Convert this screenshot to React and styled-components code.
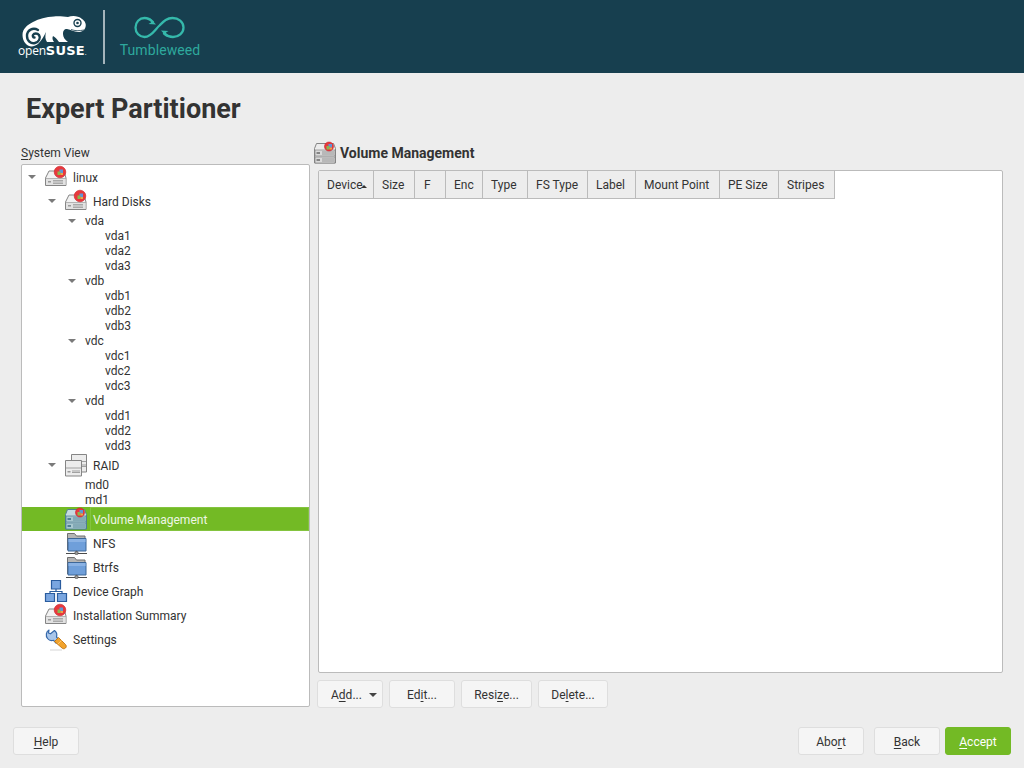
import styled, { createGlobalStyle } from 'styled-components';

const GlobalStyle = createGlobalStyle`
    html, body {
        margin: 0;
        padding: 0;
        background: #ededed;
    }

    body {
        font-family: Roboto, "Liberation Sans", sans-serif;
        font-size: 12px;
        color: #333333;
    }
`;

const IconSvg = styled.svg.attrs({ width: 24, height: 24, viewBox: '0 0 24 24' })`
    display: block;
    flex: none;
`;

const RedBadge = ({ x, y, r }) => (
    <g>
        <circle cx={x} cy={y} r={r} fill="#e8383c" stroke="#c8242a" strokeWidth=".6" />
        <path d={`M${x - .5} ${y - 2.5}h3.500v3.500h-3.500z`} fill="#5f96d8" />
        <path d={`M${x - 2.5} ${y - .5}h3v3.500h-3z`} fill="#8ab84f" />
        <path d={`M${x + .5} ${y + 1}h2.500v2h-2.500z`} fill="#e8a848" />
    </g>
);

const DiskIcon = () => (
    <IconSvg>
        <path d="M1.500 13 5 6h15l2 7v7.500H1.500z" fill="#f2f2f2" stroke="#858585" strokeWidth="1" strokeLinejoin="round" />
        <path d="M2 13.500h19.500v6.500H2z" fill="#e2e2e2" />
        <path d="M1.500 13.500h20.500" stroke="#a5a5a5" strokeWidth=".8" />
        <path d="M9 15.500h10M9 17h10M9 18.500h10" stroke="#9a9a9a" strokeWidth=".8" />
        <path d="M4 16h3v1.500H4z" fill="#9a9a9a" />
        <RedBadge x={16} y={7} r={5.800} />
    </IconSvg>
);

const LvmIcon = ({ selected }) => {
    const shell = selected ? '#c5dbe0' : '#ececec';
    const edge = selected ? '#4f7f92' : '#858585';

    return (
        <IconSvg>
            <path d="M1.500 7.500 3.500 2.500h17l2 5V22h-21z" fill={shell} stroke={edge} strokeWidth="1" strokeLinejoin="round" />
            <path d="M2 9h20v6H2zM2 16h20v6H2z" fill={selected ? '#a9c8d0' : '#dadada'} stroke={edge} strokeWidth=".7" />
            <path d="M9 11h12M9 13h12M9 18h12M9 20h12" stroke={edge} strokeWidth=".8" />
            <path d="M3.500 11h3.500v2H3.500zM3.500 18h3.500v2H3.500z" fill={edge} />
            <RedBadge x={16} y={5.500} r={4.500} />
        </IconSvg>
    );
};

const RaidIcon = () => (
    <IconSvg>
        <path d="M7.500 1.500h15v17.500h-15z" fill="#ececec" stroke="#858585" strokeWidth="1" />
        <path d="M18 8.500h4M18 12h4M18 13.500h4" stroke="#999999" strokeWidth=".9" />
        <path d="M1.500 7.500h16v15.500h-16z" fill="#ececec" stroke="#858585" strokeWidth="1" />
        <path d="M2 15h15" stroke="#999999" strokeWidth=".9" />
        <path d="M8 18h8M8 19.500h8" stroke="#999999" strokeWidth=".9" />
        <path d="M3.500 18h3v1.500h-3z" fill="#999999" />
    </IconSvg>
);

const FolderIcon = () => (
    <IconSvg>
        <path d="M3.500 19V2.500h7l2 2.500h8.500v4H3.500z" fill="#b5b5b5" stroke="#6f6f6f" strokeWidth="1" />
        <path d="M4 7.500h18V20H4z" fill="#6f9fda" stroke="#3d6798" strokeWidth="1" strokeLinejoin="round" />
        <path d="M4.500 8h17v3h-17z" fill="#8ab2e4" />
        <path d="M2 22.500h21" stroke="#4a4a4a" strokeWidth="1" />
        <path d="M12.500 20v1" stroke="#4a4a4a" strokeWidth="1" />
        <circle cx="12.500" cy="22" r="1.700" fill="#9a9a9a" stroke="#444444" strokeWidth=".6" />
    </IconSvg>
);

const GraphIcon = () => (
    <IconSvg>
        <path d="M12 10v2.500M6 14.500v-2h12v2" fill="none" stroke="#2a5c9e" strokeWidth="1.200" />
        <path d="M7.500 1.500h9V10h-9zM1.500 14.500h9v8h-9zM13.500 14.500h9v8h-9z" fill="#7aa6e0" stroke="#2a5c9e" strokeWidth="1.200" />
    </IconSvg>
);

const SettingsIcon = () => (
    <IconSvg>
        <path d="M5 3C2 4.500 1.500 9 3.500 11.500c1.500 1.800 4 2.500 6 1.800l2.500 2.700 3-3-2.500-3c.7-2.500 0-5-2-6.500L6.500 6.800 4.500 6z" fill="#a9c6ea" stroke="#3568aa" strokeWidth="1.200" strokeLinejoin="round" />
        <path d="M10.500 14.500 14.500 10.500l7 7c1 1 1 2.500 0 3.500s-2.500 1-3.500 0z" fill="#f2a32c" stroke="#c07412" strokeWidth=".9" />
        <path d="M14 17l3.500-3.500" stroke="#ffc870" strokeWidth="1" />
        <path d="M6 23h12" stroke="#d5d5d5" strokeWidth="1" />
    </IconSvg>
);

const icons = {
    disk: DiskIcon,
    lvm: LvmIcon,
    raid: RaidIcon,
    folder: FolderIcon,
    graph: GraphIcon,
    settings: SettingsIcon,
};

const treeRows = [
    { label: 'linux', depth: 0, icon: 'disk', open: true },
    { label: 'Hard Disks', depth: 1, icon: 'disk', open: true },
    { label: 'vda', depth: 2, open: true },
    { label: 'vda1', depth: 3 },
    { label: 'vda2', depth: 3 },
    { label: 'vda3', depth: 3 },
    { label: 'vdb', depth: 2, open: true },
    { label: 'vdb1', depth: 3 },
    { label: 'vdb2', depth: 3 },
    { label: 'vdb3', depth: 3 },
    { label: 'vdc', depth: 2, open: true },
    { label: 'vdc1', depth: 3 },
    { label: 'vdc2', depth: 3 },
    { label: 'vdc3', depth: 3 },
    { label: 'vdd', depth: 2, open: true },
    { label: 'vdd1', depth: 3 },
    { label: 'vdd2', depth: 3 },
    { label: 'vdd3', depth: 3 },
    { label: 'RAID', depth: 1, icon: 'raid', open: true },
    { label: 'md0', depth: 2 },
    { label: 'md1', depth: 2 },
    { label: 'Volume Management', depth: 1, icon: 'lvm', selected: true },
    { label: 'NFS', depth: 1, icon: 'folder' },
    { label: 'Btrfs', depth: 1, icon: 'folder' },
    { label: 'Device Graph', depth: 0, icon: 'graph' },
    { label: 'Installation Summary', depth: 0, icon: 'disk' },
    { label: 'Settings', depth: 0, icon: 'settings' },
];

const columns = [
    { label: 'Device', width: 55, sorted: true },
    { label: 'Size', width: 41 },
    { label: 'F', width: 31, pad: 9 },
    { label: 'Enc', width: 37 },
    { label: 'Type', width: 45 },
    { label: 'FS Type', width: 60 },
    { label: 'Label', width: 48 },
    { label: 'Mount Point', width: 84 },
    { label: 'PE Size', width: 59 },
    { label: 'Stripes', width: 56 },
];

const App = () => {
    return (
        <Page>
            <GlobalStyle />
            <Banner>
                <svg width="90" height="60" viewBox="0 0 90 60">
                    <path
                        d="M22.500 35C22.500 29 27 25 33 22 39 18.500 46 17 54 16.500 60 16 64 17 68 17 72 15.500 78 15.500 82 19 85 21 86.500 24 85.500 27 85 30 82 32 78 32 74 32 71 29.500 67 29 64 29 63 31 63 34 63 37 65 40 68 42L59 42C57 39 55 37 53 36 52 38 52.500 40 54 42L47 42C45 39 45 36 46 32 44 36 42 40 38 44 34 47 29 47.500 26 44 23.500 41.500 22.500 38 22.500 35Z"
                        fill="#ffffff"
                    />
                    <path
                        d="M38 30C33 27 27 30 27 36 27 41 31 44 35 43 39 42 41 38 39 35 37.500 33 34 33 33 35 32.500 36 33 37.500 34.500 37.500"
                        fill="none"
                        stroke="#173f4f"
                        strokeWidth="2.400"
                        strokeLinecap="round"
                    />
                    <circle cx="77.500" cy="23" r="4.200" fill="#173f4f" />
                    <circle cx="77.500" cy="23" r="2.800" fill="#ffffff" />
                    <circle cx="77.500" cy="23" r="1.300" fill="#173f4f" />
                    <path d="M71 29.500c4 1.500 8 1.500 13 .5" fill="none" stroke="#173f4f" strokeWidth=".8" />
                </svg>
                <LogoText>open<b>SUSE</b><small>.</small></LogoText>
                <Divider />
                <Tumbleweed>
                    <svg width="52" height="24" viewBox="0 0 52 24">
                        <path
                            d="M19 6C16 3 13 2 10.500 2 5.500 2 1.500 6 1.500 11.500S5.500 21 10.500 21c7 0 11-8 15-11.500 4-4 7-7.500 13-7.500 6 0 11 4 11 9.500S44.500 21 39 21c-3 0-6-1-9-3.500"
                            fill="none"
                            stroke="#35b9ab"
                            strokeWidth="2.300"
                            strokeLinecap="round"
                        />
                        <path d="M22 8.500 14.500 8l2.500-1.500L16 2z" fill="#35b9ab" />
                        <path d="M27 14.500l7.500.5-2.500 1.500 1 4.500z" fill="#35b9ab" />
                    </svg>
                    <TumbleweedLabel>Tumbleweed</TumbleweedLabel>
                </Tumbleweed>
            </Banner>

            <Title>Expert Partitioner</Title>

            <Content>
                <Sidebar>
                    <FieldLabel><Key>S</Key>ystem View</FieldLabel>
                    <Tree>
                        {treeRows.map((row) => {
                            const Icon = icons[row.icon];
                            return (
                                <TreeRow key={row.label} $depth={row.depth} $tall={!!row.icon} $selected={row.selected}>
                                    <ArrowCell>{row.open && <TreeArrow />}</ArrowCell>
                                    {Icon && <Icon selected={row.selected} />}
                                    <TreeLabel $icon={!!row.icon} $selected={row.selected}>{row.label}</TreeLabel>
                                </TreeRow>
                            );
                        })}
                    </Tree>
                </Sidebar>

                <Panel>
                    <PanelHeading>
                        <LvmIcon />
                        <PanelTitle>Volume Management</PanelTitle>
                    </PanelHeading>
                    <TableBox>
                        <TableHead>
                            {columns.map((col) => (
                                <HeadCell key={col.label} $width={col.width} $pad={col.pad}>
                                    {col.label}
                                    {col.sorted && <SortMark />}
                                </HeadCell>
                            ))}
                        </TableHead>
                    </TableBox>
                    <ActionRow>
                        <Button $width={66} $menu>A<Key>d</Key>d...<MenuArrow /></Button>
                        <Button $width={66}>Ed<Key>i</Key>t...</Button>
                        <Button $width={71}>Resi<Key>z</Key>e...</Button>
                        <Button $width={70}>De<Key>l</Key>ete...</Button>
                    </ActionRow>
                </Panel>
            </Content>

            <Footer>
                <Button $width={66}><Key>H</Key>elp</Button>
                <FooterRight>
                    <Button $width={66}>Abo<Key>r</Key>t</Button>
                    <Button $width={66} $gap={10}><Key>B</Key>ack</Button>
                    <Button $width={66} $gap={5} $primary><Key>A</Key>ccept</Button>
                </FooterRight>
            </Footer>
        </Page>
    );
};

const Page = styled.div`
    width: 1024px;
    height: 768px;
    display: flex;
    flex-direction: column;
    overflow: hidden;
    background: #ededed;
`;

const Banner = styled.header`
    position: relative;
    height: 73px;
    flex: none;
    display: flex;
    align-items: flex-start;
    background: #173f4f;
`;

const LogoText = styled.div`
    position: absolute;
    left: 18px;
    top: 43px;
    font-family: "Open Sans", sans-serif;
    font-size: 12px;
    line-height: 16px;
    color: #ffffff;
    letter-spacing: -.2px;

    b {
        font-family: "DejaVu Sans", sans-serif;
        font-size: 13px;
        font-weight: 700;
        letter-spacing: .2px;
    }

    small {
        font-size: 7px;
    }
`;

const Divider = styled.div`
    width: 2px;
    height: 54px;
    margin: 10px 0 0 13px;
    background: #a4b4bb;
`;

const Tumbleweed = styled.div`
    display: flex;
    flex-direction: column;
    align-items: center;
    width: 80px;
    margin: 16px 0 0 15px;
`;

const TumbleweedLabel = styled.div`
    margin-top: 2px;
    font-family: Roboto, sans-serif;
    font-size: 14px;
    line-height: 16px;
    letter-spacing: .1px;
    color: #2ea99d;
`;

const Title = styled.h1`
    margin: 0;
    padding: 21px 0 0 26px;
    height: 48px;
    flex: none;
    box-sizing: border-box;
    font-size: 27px;
    line-height: 30px;
    font-weight: 700;
    color: #333333;
`;

const Content = styled.main`
    display: flex;
    gap: 4px;
    height: 567px;
    margin-top: 20px;
    padding-left: 21px;
`;

const Sidebar = styled.section`
    width: 289px;
    display: flex;
    flex-direction: column;
    padding-top: 4px;
    box-sizing: border-box;
`;

const FieldLabel = styled.div`
    height: 19px;
    line-height: 17px;
`;

const Key = styled.span`
    text-decoration: underline;
    text-underline-offset: 2px;
`;

const Tree = styled.div`
    height: 543px;
    box-sizing: border-box;
    background: #ffffff;
    border: 1px solid #bbbbbb;
    border-radius: 2px;
`;

const TreeRow = styled.div`
    display: flex;
    align-items: center;
    box-sizing: border-box;
    height: ${(props) => (props.$tall ? 24 : 15)}px;
    padding-left: ${(props) => props.$depth * 20}px;
    background: ${(props) => (props.$selected ? '#73ba25' : 'transparent')};
`;

const ArrowCell = styled.div`
    width: 22px;
    flex: none;
    display: flex;
    justify-content: center;
    padding-right: 2px;
    box-sizing: border-box;
`;

const TreeArrow = styled.span`
    width: 0;
    height: 0;
    border-left: 4px solid transparent;
    border-right: 4px solid transparent;
    border-top: 4px solid #7a7a7a;
`;

const TreeLabel = styled.div`
    flex: 1;
    align-self: stretch;
    display: flex;
    align-items: center;
    box-sizing: border-box;
    margin-left: ${(props) => (props.$icon ? 2 : 1)}px;
    padding: ${(props) => (props.$icon ? '2px 0 0 3px' : '0')};
    color: ${(props) => (props.$selected ? '#eef6e4' : '#333333')};
    outline: ${(props) => (props.$selected ? '1px solid #84c43f' : 'none')};
    outline-offset: -1px;
`;

const Panel = styled.section`
    width: 689px;
    display: flex;
    flex-direction: column;
`;

const PanelHeading = styled.div`
    height: 24px;
    margin-left: -1px;
    display: flex;
    align-items: center;
    gap: 3px;
`;

const PanelTitle = styled.h2`
    margin: 0;
    font-size: 14px;
    font-weight: 700;
    color: #333333;
`;

const TableBox = styled.div`
    height: 503px;
    margin: 5px 0 0 4px;
    box-sizing: border-box;
    background: #ffffff;
    border: 1px solid #bbbbbb;
    border-radius: 2px;
`;

const TableHead = styled.div`
    display: flex;
`;

const HeadCell = styled.div`
    position: relative;
    width: ${(props) => props.$width}px;
    height: 28px;
    box-sizing: border-box;
    padding-left: ${(props) => props.$pad || 8}px;
    line-height: 29px;
    background: #ededed;
    border-right: 1px solid #bbbbbb;
    border-bottom: 1px solid #bbbbbb;
`;

const SortMark = styled.span`
    position: absolute;
    left: 42px;
    top: 14px;
    width: 0;
    height: 0;
    border-left: 3px solid transparent;
    border-right: 3px solid transparent;
    border-bottom: 3px solid #333333;
`;

const ActionRow = styled.div`
    display: flex;
    gap: 6px;
    margin: 7px 0 0 3px;
`;

const Button = styled.button`
    width: ${(props) => props.$width}px;
    height: 28px;
    margin-left: ${(props) => props.$gap || 0}px;
    padding: 2px 0 0 ${(props) => (props.$menu ? 13 : 0)}px;
    box-sizing: border-box;
    text-align: ${(props) => (props.$menu ? 'left' : 'center')};
    font-family: inherit;
    font-size: 12px;
    color: ${(props) => (props.$primary ? '#ffffff' : '#333333')};
    background: ${(props) => (props.$primary ? '#73ba25' : '#f5f5f5')};
    border: 1px solid ${(props) => (props.$primary ? '#73ba25' : '#dedede')};
    border-radius: 3px;
`;

const MenuArrow = styled.span`
    display: inline-block;
    width: 0;
    height: 0;
    margin-left: 7px;
    vertical-align: 2px;
    border-left: 4px solid transparent;
    border-right: 4px solid transparent;
    border-top: 4px solid #444444;
`;

const Footer = styled.footer`
    display: flex;
    justify-content: space-between;
    padding: 19px 13px 0;
`;

const FooterRight = styled.div`
    display: flex;
`;

export default App;
